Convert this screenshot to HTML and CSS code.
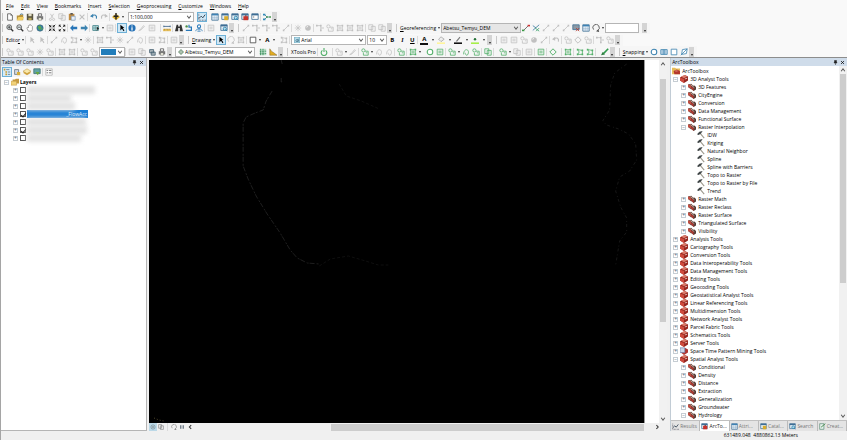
FILE: index.html
```html
<!DOCTYPE html>
<html lang="en">
<head>
<meta charset="utf-8">
<title>Map workspace</title>
<link rel="stylesheet" href="styles.css">
</head>
<body>
<svg class="defs" aria-hidden="true">
  <symbol id="new" viewBox="0 0 10 10"><path d="M2 1h4l2 2v6H2z" fill="#fff" stroke="#555"/><path d="M6 1v2h2" fill="none" stroke="#777"/></symbol>
  <symbol id="open" viewBox="0 0 10 10"><path d="M1 3h3l1-1h4v7H1z" fill="#b8923c"/><path d="M1 9l2-4h7L8 9z" fill="#f2cf62"/><path d="M5 2l2-1 2 1" fill="none" stroke="#3c78a8"/></symbol>
  <symbol id="save" viewBox="0 0 10 10"><path d="M1 1h8v8H1z" fill="#5a5540"/><path d="M3 1h4v3H3z" fill="#e5e0c8"/><path d="M3 6h4v3H3z" fill="#b9a95c"/></symbol>
  <symbol id="print" viewBox="0 0 10 10"><path d="M3 1h4v3H3z" fill="#fff" stroke="#555"/><path d="M1 4h8v4H1z" fill="#777"/><path d="M3 6h4v3H3z" fill="#f8f8e8" stroke="#555" stroke-width=".6"/></symbol>
  <symbol id="cut" viewBox="0 0 10 10"><path d="M3 1l3 5M7 1L4 6" fill="none" stroke="currentColor"/><circle cx="3" cy="8" r="1.3" fill="none" stroke="currentColor"/><circle cx="7" cy="8" r="1.3" fill="none" stroke="currentColor"/></symbol>
  <symbol id="copy" viewBox="0 0 10 10"><path d="M1 1h5v6H1zM4 3h5v6H4z" fill="#f6f6f6" stroke="currentColor"/></symbol>
  <symbol id="paste" viewBox="0 0 10 10"><path d="M1 1h7v8H1z" fill="#c08c42"/><path d="M3 0h3v2H3z" fill="#555"/><path d="M4 4h5v5H4z" fill="#e6effa" stroke="#6484ad" stroke-width=".7"/></symbol>
  <symbol id="del" viewBox="0 0 10 10"><path d="M2 2l6 6M8 2L2 8" stroke="currentColor" stroke-width="1.4"/></symbol>
  <symbol id="undo" viewBox="0 0 10 10"><path d="M2 4c4-3 7-1 6 3" fill="none" stroke="currentColor" stroke-width="1.5"/><path d="M0 4l4-3v5z" fill="currentColor"/></symbol>
  <symbol id="redo" viewBox="0 0 10 10"><path d="M8 4C4 1 1 3 2 7" fill="none" stroke="currentColor" stroke-width="1.5"/><path d="M10 4L6 1v5z" fill="currentColor"/></symbol>
  <symbol id="add" viewBox="0 0 10 10"><path d="M5 1l5 4-5 4-5-4z" fill="#e3b52f"/><path d="M5 0v8M2 4h6" stroke="#222" stroke-width="1.8"/></symbol>
  <symbol id="editbar" viewBox="0 0 10 10"><path d="M1 7l3-3 2 2 3-4" fill="none" stroke="#345" stroke-width="1.2"/><path d="M1 9h9M1 1v7" stroke="#445" stroke-dasharray="1 1"/></symbol>
  <symbol id="table" viewBox="0 0 10 10"><path d="M1 1h8v8H1z" fill="#eef5fb" stroke="#3e6d94"/><path d="M1 1h8v2H1z" fill="#3e82b4"/><path d="M1 6h8M4 3v6M6.500 3v6" stroke="#7ba0bd" stroke-width=".6"/></symbol>
  <symbol id="catalog" viewBox="0 0 10 10"><path d="M1 1h8v7H1z" fill="#e8f0f6" stroke="#3e6d94"/><path d="M1 1h8v2H1z" fill="#3e6d94"/><path d="M4 4h5v5H4z" fill="#d8ac2d"/></symbol>
  <symbol id="search" viewBox="0 0 10 10"><path d="M1 1h8v7H1z" fill="#e8f0f6" stroke="#3e6d94"/><path d="M1 1h8v2H1z" fill="#3e6d94"/><circle cx="6" cy="6" r="2" fill="#b6e0ee" stroke="#247caa"/><path d="M7 7l2 2" stroke="#247caa"/></symbol>
  <symbol id="toolwin" viewBox="0 0 10 10"><path d="M1 1h8v7H1z" fill="#e8f0f6" stroke="#3e6d94"/><path d="M1 1h8v2H1z" fill="#3e6d94"/><path d="M3 4h6v5H3z" fill="#c7322b"/><path d="M5 3h2v1H5z" fill="#611"/></symbol>
  <symbol id="python" viewBox="0 0 10 10"><path d="M1 1h8v7H1z" fill="#fff" stroke="#3e6d94"/><path d="M1 1h8v2H1z" fill="#3e6d94"/><path d="M3 4l1 1-1 1" fill="none" stroke="#444" stroke-width=".7"/></symbol>
  <symbol id="model" viewBox="0 0 10 10"><path d="M2 2l3 3-3 3M5 5h4" fill="none" stroke="#31758e"/><path d="M0 1h3v2H0zM0 7h3v2H0z" fill="#338ab8"/><path d="M4 4h2v2H4zM8 4h2v2H8z" fill="#4b9b4b"/></symbol>
  <symbol id="zoomin" viewBox="0 0 10 10"><path d="M6 6l3 3" stroke="#333" stroke-width="1.700"/><circle cx="4" cy="4" r="3" fill="#edf6f8" stroke="#444"/><path d="M2 4h4M4 2v4" stroke="#333"/></symbol>
  <symbol id="zoomout" viewBox="0 0 10 10"><path d="M6 6l3 3" stroke="#333" stroke-width="1.700"/><circle cx="4" cy="4" r="3" fill="#edf6f8" stroke="#444"/><path d="M2 4h4" stroke="#333"/></symbol>
  <symbol id="pan" viewBox="0 0 10 10"><path d="M3 9L1 5l1-1 1 1V2l1-1 1 1V1h1l1 1 1 1v4L7 9z" fill="#fff" stroke="#777" stroke-width=".8"/></symbol>
  <symbol id="globe" viewBox="0 0 10 10"><circle cx="5" cy="5" r="4" fill="#3581ae" stroke="#3a5c64" stroke-width=".7"/><path d="M2 3l3-1 2 2-2 4-2-2zM7 5l2 1-2 2z" fill="#59a552"/></symbol>
  <symbol id="page" viewBox="0 0 10 10"><circle cx="5" cy="5" r="3.500" fill="#d5e3e9" stroke="#5f7c8a"/><path d="M3 4h4M3 6h4" stroke="#5f7c8a"/></symbol>
  <symbol id="fixin" viewBox="0 0 10 10"><path d="M1 1l3 3M9 1L6 4M1 9l3-3M9 9L6 6" stroke="#222" stroke-width="1.2"/><path d="M4 1v3H1zM6 1v3h3zM1 6h3v3zM9 6H6v3z" fill="#222"/></symbol>
  <symbol id="fixout" viewBox="0 0 10 10"><path d="M1 4V1h3zM9 4V1H6zM1 6v3h3zM9 6v3H6z" fill="#222"/><path d="M2 2l2 2M8 2L6 4M2 8l2-2M8 8L6 6" stroke="#222"/></symbol>
  <symbol id="back" viewBox="0 0 10 10"><path d="M0 5l4-4v2.500h5v3H4V9z" fill="#2876b8"/></symbol>
  <symbol id="fwd" viewBox="0 0 10 10"><path d="M10 5L6 1v2.500H1v3h5V9z" fill="currentColor"/></symbol>
  <symbol id="select" viewBox="0 0 10 10"><path d="M1 2h7v6H1z" fill="#c7e7e4" stroke="#397c85"/><path d="M4 2v6M1 5h7" stroke="#397c85" stroke-width=".7"/><path d="M6 3l3 3-2 1-1 2z" fill="#222"/></symbol>
  <symbol id="pointer" viewBox="0 0 10 10"><path d="M3 1v7l2-2 2 3 1-1-2-3h2z" fill="currentColor"/></symbol>
  <symbol id="info" viewBox="0 0 10 10"><circle cx="5" cy="5" r="4.500" fill="#2470b5"/><path d="M5 4v4M5 2v1" stroke="#fff" stroke-width="1.500"/></symbol>
  <symbol id="pen" viewBox="0 0 10 10"><path d="M2 8l5-6 1 1-5 5zM1 9l1-2" fill="none" stroke="currentColor"/></symbol>
  <symbol id="brush" viewBox="0 0 10 10"><path d="M3 7l6-6" stroke="#2f9a4c" stroke-width="2"/><path d="M0 9l2-4 3 3z" fill="#2f7d42"/></symbol>
  <symbol id="box" viewBox="0 0 10 10"><path d="M1.500 1.500h7v7h-7zM3 4h4M3 6h4" fill="none" stroke="currentColor"/></symbol>
  <symbol id="measure" viewBox="0 0 10 10"><path d="M1 3h8M1 2v2M9 2v2" stroke="#345b80"/><path d="M0 6h10v3H0z" fill="#e9c15d"/><path d="M2 6v2M4 6v1M6 6v2M8 6v1" stroke="#745d2f" stroke-width=".6"/></symbol>
  <symbol id="find" viewBox="0 0 10 10"><path d="M2 1h2v2h2V1h2l2 8H6V5H4v4H0z" fill="#333"/></symbol>
  <symbol id="route" viewBox="0 0 10 10"><path d="M1 8h7V4H5V1" fill="none" stroke="#2878b8" stroke-width="1.500"/><circle cx="2" cy="3" r="1.500" fill="#489044"/></symbol>
  <symbol id="xy" viewBox="0 0 10 10"><circle cx="5" cy="3" r="2" fill="none" stroke="#2878b8" stroke-width="1.300"/><path d="M5 5v3M1 9c0-4 8-4 8 0M3 9h4" fill="none" stroke="#2878b8"/></symbol>
  <symbol id="line" viewBox="0 0 10 10"><path d="M2 8l6-6" stroke="currentColor"/><path d="M1 7h2v2H1zM7 1h2v2H7z" fill="currentColor"/></symbol>
  <symbol id="angle" viewBox="0 0 10 10"><path d="M1 2h5v7M6 5h4" fill="none" stroke="currentColor"/><path d="M0 1h2v2H0zM5 1h2v2H5zM5 7h2v2H5z" fill="currentColor"/></symbol>
  <symbol id="poly" viewBox="0 0 10 10"><path d="M2 2l6 1v5H2L4 5z" fill="none" stroke="currentColor"/><path d="M1 1h2v2H1zM7 2h2v2H7zM7 7h2v2H7zM1 7h2v2H1z" fill="currentColor"/></symbol>
  <symbol id="arc" viewBox="0 0 10 10"><path d="M2 8c0-8 7-7 6-2S4 9 4 6" fill="none" stroke="currentColor"/></symbol>
  <symbol id="nodes" viewBox="0 0 10 10"><path d="M2 2v6h6V2zM2 5h6M5 2v6" fill="none" stroke="currentColor" stroke-width=".8"/><path d="M1 1h2v2H1zM7 1h2v2H7zM1 7h2v2H1zM7 7h2v2H7z" fill="currentColor"/></symbol>
  <symbol id="cluster" viewBox="0 0 10 10"><circle cx="3" cy="3" r="2" fill="none" stroke="currentColor"/><path d="M5 4h4v5H3V6M6 6h2" fill="none" stroke="currentColor"/></symbol>
  <symbol id="ball" viewBox="0 0 10 10"><circle cx="5" cy="5" r="3.500" fill="currentColor"/><path d="M3 4l2-1" stroke="#fff"/></symbol>
  <symbol id="star" viewBox="0 0 10 10"><path d="M5 1v8M1 5h8M2 2l6 6M8 2L2 8" stroke="currentColor" stroke-width=".8"/></symbol>
  <symbol id="diamond" viewBox="0 0 10 10"><path d="M5 1l4 4-4 4-4-4z" fill="none" stroke="currentColor" stroke-width="1.200"/></symbol>
  <symbol id="power" viewBox="0 0 10 10"><path d="M3 3a3.500 3.500 0 1 0 4 0M5 0v5" fill="none" stroke="currentColor" stroke-width="1.400"/></symbol>
  <symbol id="rot" viewBox="0 0 10 10"><path d="M2 7a4 4 0 1 1 5 1" fill="none" stroke="currentColor"/><path d="M5 9l3-2 1 3z" fill="currentColor"/></symbol>
  <symbol id="ctrl" viewBox="0 0 10 10"><path d="M2 8l6-6" stroke="#555"/><path d="M0 7h3v2H0z" fill="#3a9a45"/><path d="M7 1h3v2H7z" fill="#c33"/></symbol>
  <symbol id="ctrlx" viewBox="0 0 10 10"><path d="M1 2l4 3M1 8l8-7" stroke="#3978a0"/><path d="M4 5l5 4M9 5L5 9" stroke="#38a068"/></symbol>
  <symbol id="link" viewBox="0 0 10 10"><path d="M1 1h8v6H1z" fill="#8c99a5" stroke="#3e6d94"/><path d="M5 5l4 4M9 5L5 9" stroke="#bd392d"/></symbol>
  <symbol id="rect" viewBox="0 0 10 10"><path d="M1.500 1.500h7v7h-7z" fill="#fff" stroke="currentColor"/></symbol>
  <symbol id="circle" viewBox="0 0 10 10"><circle cx="5" cy="5" r="3.500" fill="#fff" stroke="currentColor" stroke-width="1.300"/></symbol>
  <symbol id="ends" viewBox="0 0 10 10"><path d="M1 2h8v6H1z" fill="#c9dcea" stroke="currentColor"/><path d="M4 2v6M6 2v6" stroke="currentColor"/></symbol>
  <symbol id="edge" viewBox="0 0 10 10"><path d="M2 8l1-6 6-1-1 6z" fill="#fff" stroke="currentColor"/><path d="M1 9l8-8" stroke="currentColor"/></symbol>
  <symbol id="fill" viewBox="0 0 10 10"><path d="M2 4l3-3 4 3-4 3z" fill="#eee" stroke="#888" stroke-width=".7"/><path d="M0 8h10v2H0z" fill="#fff59b"/></symbol>
  <symbol id="linecol" viewBox="0 0 10 10"><path d="M2 7l5-6 1 1-4 5z" fill="#777"/><path d="M0 8h10v2H0z" fill="#111"/></symbol>
  <symbol id="mark" viewBox="0 0 10 10"><circle cx="5" cy="4" r="1.500" fill="#247036"/><path d="M0 8h10v2H0z" fill="#a7ef48"/></symbol>
  <symbol id="layer" viewBox="0 0 10 10"><path d="M5 0l5 5-5 5-5-5z" fill="#75957c"/><path d="M5 2v6M2 5h6" stroke="#e5efe3"/></symbol>
  <symbol id="hist" viewBox="0 0 10 10"><path d="M1 1l2 3 3 2 4 3H1z" fill="#e4ad20" stroke="#795f25" stroke-width=".6"/></symbol>
  <symbol id="raster" viewBox="0 0 10 10"><path d="M1 1h8v8H1z" fill="#b8dec6"/><path d="M2 1v8M5 1v8M1 4h8M1 7h8" stroke="#348956" stroke-dasharray="2 1"/></symbol>
  <symbol id="cubes" viewBox="0 0 10 10"><path d="M2 2h5v4H2zM4 5h5v4H4z" fill="#aeb8bd" stroke="#446070"/></symbol>
  <symbol id="fonticon" viewBox="0 0 10 10"><path d="M1 0h8v10H1z" fill="#bfe0ec" stroke="#4291ad"/><circle cx="5" cy="6" r="1.800" fill="none" stroke="#235a75"/><path d="M7 3v5" stroke="#235a75"/></symbol>
  <symbol id="list" viewBox="0 0 10 10"><path d="M1 2h2M3 5h2M3 8h2" stroke="#c99d35" stroke-width="2"/><path d="M4 2h4M6 5h3M6 8h3" stroke="#5a7890"/></symbol>
  <symbol id="cyl" viewBox="0 0 10 10"><path d="M2 2h5v6H2z" fill="#d4dae0" stroke="#66747e"/><path d="M5 5h4v4H5z" fill="#d7ae38"/></symbol>
  <symbol id="layers" viewBox="0 0 10 10"><path d="M5 3l5 3-5 3-5-3z" fill="#d7a63c"/><path d="M5 1l5 3-5 3-5-3z" fill="#fae8a9" stroke="#b18832" stroke-width=".6"/></symbol>
  <symbol id="selist" viewBox="0 0 10 10"><path d="M1 1h8v6H1z" fill="#61a5a5" stroke="#3d6d75"/><path d="M3 5h5L6 9z" fill="#69a741"/></symbol>
  <symbol id="opts" viewBox="0 0 10 10"><path d="M1 1h8v8H1z" fill="#fff" stroke="#999" stroke-width=".7"/><path d="M2 3h2M5 3h3M2 6h2M5 6h3" stroke="#555"/></symbol>
  <symbol id="folder" viewBox="0 0 10 10"><path d="M2 2h3l1-1h4v6H2z" fill="#c79b42"/><path d="M0 4h7v5H0z" fill="#f1d279" stroke="#b78f3e" stroke-width=".6"/></symbol>
  <symbol id="toolbox" viewBox="0 0 10 10"><path d="M0 3l6-3 4 2v5L5 10 0 7z" fill="#96261f"/><path d="M0 3l5 2v5L0 7z" fill="#cf4b3e"/><path d="M1 2l5-2 3 2-4 2z" fill="#db7c6c"/><path d="M6 5l3-1" stroke="#f2d7d0"/></symbol>
  <symbol id="pybox" viewBox="0 0 10 10"><path d="M1 3l5-2 4 2v4L5 10 1 7z" fill="#b23531"/><path d="M0 1h6v6H0z" fill="#cad6e8" stroke="#5270a0" stroke-width=".7"/></symbol>
  <symbol id="toolset" viewBox="0 0 10 10"><path d="M0 2l4-1 3 3v3L4 8 0 5z" fill="#6b493e"/><path d="M0 2l4 1v4L0 5z" fill="#c24c40"/><path d="M4 4l4-1 2 2v3L7 10 4 7z" fill="#543a34"/><path d="M4 4l3 2v4L4 7z" fill="#b13a32"/><path d="M3 2l5 4" stroke="#e3d9cc" stroke-width=".8"/></symbol>
  <symbol id="hammer" viewBox="0 0 10 10"><path d="M4 3l5 6" stroke="#9a978b" stroke-width="1.300"/><path d="M0 4l3-3 4-1-2 3-3 2z" fill="#3f4546"/></symbol>
  <symbol id="root" viewBox="0 0 10 10"><path d="M0 1h4l1 1h5v7H0z" fill="#e7bd59"/><path d="M2 5l4-2 4 2v4H3z" fill="#b3382c"/><path d="M4 5h3" stroke="#f0a18d"/></symbol>
  <symbol id="create" viewBox="0 0 10 10"><path d="M1 1h6v8H1z" fill="#e7f3ee" stroke="#5a8d76"/><path d="M3 6l6-5" stroke="#4d8c51" stroke-width="1.400"/></symbol>
  <symbol id="pin" viewBox="0 0 10 10"><path d="M3 1h4v4h1v1H2V5h1zM5 6v4" fill="#222" stroke="#222"/></symbol>
  <symbol id="up" viewBox="0 0 10 10"><path d="M2 7l3-4 3 4" fill="none" stroke="#555" stroke-width="1.700"/></symbol>
  <symbol id="down" viewBox="0 0 10 10"><path d="M2 3l3 4 3-4" fill="none" stroke="#555" stroke-width="1.700"/></symbol>
  <symbol id="left" viewBox="0 0 10 10"><path d="M7 2L4 5l3 3" fill="none" stroke="#333" stroke-width="1.700"/></symbol>
  <symbol id="right" viewBox="0 0 10 10"><path d="M4 2l3 3-3 3" fill="none" stroke="#333" stroke-width="1.700"/></symbol>
  <symbol id="pause" viewBox="0 0 10 10"><path d="M3 2v6M7 2v6" stroke="#456" stroke-width="1.700"/></symbol>
</svg>

<div class="app">
  <nav class="menu" aria-label="Main menu">
    <button><u>F</u>ile</button><button><u>E</u>dit</button><button><u>V</u>iew</button><button><u>B</u>ookmarks</button><button><u>I</u>nsert</button><button><u>S</u>election</button><button><u>G</u>eoprocessing</button><button><u>C</u>ustomize</button><button><u>W</u>indows</button><button><u>H</u>elp</button>
  </nav>
  <div class="bars" id="bars"></div>

  <div class="work">
    <section class="panel toc">
      <header><h2>Table Of Contents</h2><button aria-label="Pin contents"><svg><use href="#pin"/></svg></button><button aria-label="Close contents"><svg><use href="#del"/></svg></button></header>
      <div class="tocbar" id="tocbar"></div>
      <div class="toctree">
        <div class="trow top"><button class="exp" aria-label="Toggle layers">−</button><svg><use href="#folder"/></svg><b>Layers</b></div>
        <div class="tocbody">
          <div id="checks"></div>
          <div class="names"><i class="n1"></i><i class="n2"></i><i class="n3"></i><span class="sel">_FlowAcc</span><i class="n4"></i><i class="n5"></i><i class="n6"></i></div>
        </div>
      </div>
    </section>

    <main class="view">
      <div class="canvasrow">
        <svg class="map" viewBox="0 0 495 363" preserveAspectRatio="none" role="img" aria-label="Flow accumulation raster">
          <g fill="none" stroke="#262626" stroke-width=".8">
            <path d="M132 0l1 4M132 18v4l3-1M123 31l-6 10-3 9-8 3-9 4-3 6v43l5 13 8 17 11 18 13 19 10 17 7 8 10 5 12 1" stroke-dasharray="5 2 2 1"/>
            <path d="M170 206l11-7 18-3 14 4 16 5h10M190 24l7 12 15 5 18 8" stroke="#131313" stroke-dasharray="3 2"/>
            <path d="M477 4l-12 9-4 12-1 25-7 11 4 4 12 4 10 5 7 10 1 16-7 11-10 6-4 14 5 16 6 11v14l-7 9-4 24" stroke="#1d1d1d" stroke-dasharray="3 3 1 2"/>
            <path d="M5 358l5 2 5 1" stroke="#665a3a" stroke-dasharray="1 2"/>
          </g>
        </svg>
        <div class="gutter"></div>
        <div class="vscroll"><svg><use href="#up"/></svg><span class="thumb mapthumb"></span><svg><use href="#down"/></svg></div>
      </div>
      <div class="viewbar">
        <button class="on" aria-label="Data view"><svg><use href="#page"/></svg></button><button aria-label="Layout view"><svg><use href="#copy"/></svg></button><span class="sep"></span><button aria-label="Refresh"><svg><use href="#rot"/></svg></button><button aria-label="Pause drawing"><svg><use href="#pause"/></svg></button><button aria-label="Scroll left"><svg><use href="#left"/></svg></button>
        <span class="track"><span></span></span>
        <button aria-label="Scroll right"><svg><use href="#right"/></svg></button>
      </div>
    </main>

    <section class="panel box">
      <header><h2>ArcToolbox</h2><button aria-label="Pin toolbox"><svg><use href="#pin"/></svg></button><button aria-label="Close toolbox"><svg><use href="#del"/></svg></button></header>
      <div class="boxbody">
        <div class="tree" id="tree"></div>
        <div class="vscroll"><svg><use href="#up"/></svg><span class="thumb boxthumb"></span><svg><use href="#down"/></svg></div>
      </div>
      <div class="tabs">
        <button><svg><use href="#editbar"/></svg>Results</button><button class="on"><svg><use href="#toolwin"/></svg>ArcTo...</button><button><svg><use href="#table"/></svg>Attri...</button><button><svg><use href="#catalog"/></svg>Catal...</button><button><svg><use href="#search"/></svg>Search</button><button><svg><use href="#create"/></svg>Creat...</button>
      </div>
    </section>
  </div>
  <footer class="status">631489.048&nbsp; 4880862.13 Meters</footer>
</div>
<script src="app.js"></script>
</body>
</html>
```
FILE: styles.css
```css
* { box-sizing: border-box; }
html, body { height: 100%; margin: 0; }
body { font: 5px/8px "Open Sans", "Noto Sans", sans-serif; color: #000; background: #f0f0f0; overflow: hidden; }
button, input, select { font: inherit; color: inherit; margin: 0; padding: 0; border: 0; background: none; border-radius: 0; }
svg { display: block; width: 8px; height: 8px; flex: none; }
.defs { position: absolute; width: 0; height: 0; }
.app { height: 100%; display: flex; flex-direction: column; border-left: 1px solid #a5a5a5; }

.menu { display: flex; gap: 7px; height: 11px; padding-left: 5px; background: #f9f9f9; align-items: center; }
.bars { background: #f9f9f9; border-bottom: 1px solid #8d8d8d; }
.row { display: flex; height: 12px; align-items: center; }
.row:first-child, .row:last-child { height: 11px; }
.bar { display: flex; align-items: center; height: 11px; background: #f6f6f6; }
.grip { width: 4px; height: 8px; flex: none; background: linear-gradient(90deg, transparent 1px, #c8c8c8 1px, #c8c8c8 2px, transparent 2px); }
.tb { width: 10px; height: 10px; display: flex; align-items: center; justify-content: center; flex: none; }
.bar .tb.sel { border: 1px solid #6db0d6; background: #cfe7f5; }
.tb.dim { color: #c0c0c0; }
.tb.green { color: #53b06a; }
.tb.blue { color: #3c83b0; }
.tb.dark { color: #444; }
.fmt { font-size: 6px; font-weight: 700; }
.fmt.ital { font-style: italic; font-family: "Liberation Serif", serif; }
.fmt.under { text-decoration: underline; }
.fmt.col { border-bottom: 2px solid #111; height: 9px; width: 8px; margin: 0 1px; line-height: 7px; }
.sep { width: 1px; height: 8px; background: #dadada; margin-right: 1px; flex: none; }
.sp { width: 3px; flex: none; }
.caret { width: 7px; height: 8px; display: flex; align-items: center; justify-content: center; flex: none; }
.caret::before { content: ""; border: 1px solid transparent; border-top: 2px solid #333; border-bottom: 0; }
.caret.s { width: 4px; }
.ovf { width: 5px; height: 10px; background: #d4d4d4; display: flex; align-items: flex-end; justify-content: center; padding-bottom: 1px; flex: none; margin-right: 3px; }
.ovf::before { content: ""; border: 1px solid transparent; border-top: 2px solid #222; border-bottom: 0; }
.label { white-space: nowrap; padding: 0 1px; }
.combo { display: flex; align-items: center; height: 10px; border: 1px solid #b5b5b5; background: #fff; padding-left: 1px; flex: none; }
.combo select, .combo input { flex: 1; min-width: 0; height: 8px; line-height: 8px; appearance: none; outline: 0; }
.combo svg { width: 6px; height: 6px; margin: 0 1px; }
.combo.grey { background: #e6e6e6; }
.combo .swatch { flex: 1; height: 6px; background: #217dbb; }
.w-scale { width: 66px; }
.w-geo { width: 80px; }
.w-box { width: 34px; }
.w-font { width: 75px; }
.w-size { width: 20px; margin-left: 1px; }
.w-layer { width: 80px; }
.w-color { width: 26px; }

.work { flex: 1; min-height: 0; display: flex; }
.panel { display: flex; flex-direction: column; background: #fff; }
.panel header { display: flex; align-items: center; height: 8px; background: #cfdcea; padding: 0 2px 0 1px; gap: 2px; flex: none; }
.panel h2 { flex: 1; margin: 0; font-size: 5px; line-height: 8px; font-weight: 400; }
.panel header svg { width: 5px; height: 5px; }
.toc { width: 17.2%; border-right: 1px solid #b5b5b5; border-bottom: 1px solid #b5b5b5; }
.tocbar { display: flex; height: 11px; align-items: center; background: #f5f5f5; padding-left: 1px; flex: none; }
.tocbar .sel { border: 1px solid #6db0d6; background: #d7ebf7; }
.toctree { padding: 1px 0 0 3px; }
.trow { display: flex; align-items: center; height: 8px; white-space: nowrap; }
.exp { width: 5px; height: 5px; border: 1px solid #c6cdd3; font-size: 5px; line-height: 3px; color: #567; flex: none; display: flex; align-items: center; justify-content: center; }
.top .exp { margin-right: 2px; }
.top b { margin-left: 1px; }
.tocbody { display: flex; padding-left: 9px; }
.crow { display: flex; align-items: center; height: 8px; gap: 2px; }
.crow input { appearance: none; width: 6px; height: 6px; margin: 0; border: 1px solid #555; background: #fff; display: flex; align-items: center; justify-content: center; }
.crow input:checked::before { content: ""; width: 2px; height: 4px; border: solid #222; border-width: 0 1px 1px 0; transform: rotate(40deg); }
.names { display: flex; flex-direction: column; margin-left: 1px; }
.names i { height: 8px; background: #e4e4e4; filter: blur(2px); }
.n1 { width: 68px; }
.n2 { width: 44px; }
.n3 { width: 48px; }
.n4 { width: 59px; }
.n5 { width: 60px; }
.n6 { width: 54px; }
.names .sel { width: 61px; height: 8px; background: #1d7fd6; color: #e6f2fc; text-align: right; padding-right: 1px; }

.view { flex: 1; min-width: 0; display: flex; flex-direction: column; padding: 2px 3px 0 2px; background: #f0f0f0; }
.canvasrow { flex: 1; min-height: 0; display: flex; }
.map { flex: 1; min-width: 0; width: auto; height: 100%; background: #000; }
.gutter { width: 15px; background: #fff; border-left: 1px solid #999; }
.vscroll { width: 8px; background: #f1f1f1; display: flex; flex-direction: column; align-items: center; flex: none; }
.vscroll svg { width: 6px; height: 6px; margin: 1px 0; }
.thumb { width: 6px; background: #cdcdcd; }
.mapthumb { height: 67%; margin: 11px 0 auto; }
.boxthumb { height: 59%; margin: 0 0 auto; }
.viewbar { display: flex; align-items: center; height: 8px; padding-right: 6px; flex: none; }
.viewbar button { width: 8px; height: 8px; display: flex; align-items: center; justify-content: center; color: #777; }
.viewbar svg { width: 6px; height: 6px; }
.viewbar .on { background: #bcd9e8; }
.viewbar .sep { margin: 0 2px; }
.track { flex: 1; height: 7px; display: flex; }
.track span { width: 68%; margin-left: 30%; background: #cdcdcd; }

.box { width: 20.9%; border-left: 1px solid #c2ccd5; }
.boxbody { flex: 1; min-height: 0; display: flex; }
.tree { flex: 1; min-width: 0; overflow: hidden; padding-top: 1px; }
.tree .trow { gap: 2px; }
.l0 { padding-left: 1px; }
.l1 { padding-left: 2px; }
.l2 { padding-left: 10px; }
.l3 { padding-left: 26px; }
.tabs { display: flex; height: 11px; background: #e4e4e4; border-top: 1px solid #c0c0c0; flex: none; }
.tabs button { flex: 1; display: flex; align-items: center; gap: 1px; padding-left: 1px; color: #777; white-space: nowrap; border-right: 1px solid #bbb; overflow: hidden; }
.tabs .on { background: #fff; color: #222; }
.tabs svg { width: 7px; height: 7px; }
.status { height: 9px; line-height: 9px; text-align: right; padding-right: 49px; background: #f0f0f0; flex: none; }
```
FILE: app.js
```js
// Toolbar items: "icon[:tone]", "|" separator, "v"/"w" narrow/wide menu arrow,
// "_" spacer, "=" grip, "#" overflow, "'Text" label, "@name" combo box, "!X" text format.
const rows = [
  "= new open save print | cut:dim copy:dim paste del:dim | undo:blue redo:dim | add v _ @scale _ editbar:sel _ table catalog search toolwin python | model #",
  "= zoomin zoomout pan globe | fixin fixout | back fwd:blue | select v box:dim | pointer:sel info pen:dim box:dim _ | measure | find route xy | box:dim _ search # = line:dim angle:dim angle:dim angle:dim line:dim | star:dim ball:dim | angle:dim cluster:dim nodes:dim nodes:dim nodes:dim | copy:dim copy:dim # = 'G|eoreferencing v @geo ctrl ctrlx line:dim line:dim line:dim link table rot:dark v @box _ #",
  "= 'Edito|r v | pointer:dim pointer:dim | line:dim arc:dim poly:dim v star:dim | nodes:dim angle:dim star:dim line:dim arc:dim | box:dim poly:dim | box:dim # = 'D|rawing v pointer:sel rot:dim nodes:dim | rect:dark v !A v _ poly:dim | @font @size !B !I !U | !C w fill w linecol w mark w # = box:dim box:dim cluster:dim ball:dim line:dim | undo:dim | cluster:dim diamond:dim cluster:dim | angle:dim cluster:dim #",
  "= cluster:dim cluster:dim cluster:dim star:dim cluster:dim | nodes:dim nodes:dim | cluster:dim cluster:dim @color | box:dim copy:dim cubes print # @layer _ raster hist # = '|XTools_Pro | power:green _ | cluster:dim v pen:dim | cluster:green v arc:dim arc:dim | cluster:green | nodes:green v _ circle:green box:green | cluster:green v arc:green cluster:green | copy:green | _ cluster:green v copy:dim | box:dim | box:green | diamond:green _ | nodes:green | poly:green poly:green | _ brush # = 'S|napping v circle:blue ends:blue rect:blue edge:blue #"
];
const combos = {
  scale: ["", "<input aria-label='Map scale' value='1:100,000'>"],
  geo: ["grey", "<select aria-label='Georeferenced layer'><option>Abetsu_Temyu_DEM</option></select>"],
  box: ["plain", "<input aria-label='Rotation'>"],
  font: ["", "<svg><use href='#fonticon'/></svg><select aria-label='Font'><option>Arial</option></select>"],
  size: ["", "<select aria-label='Font size'><option>10</option></select>"],
  layer: ["", "<svg><use href='#layer'/></svg><select aria-label='Active layer'><option>Aibetsu_Temyu_DEM</option></select>"],
  color: ["", "<span class='swatch'></span>"]
};
const svg = id => `<svg><use href="#${id}"/></svg>`;
const tool = (id, tone = "") => `<button class="tb ${tone}" aria-label="${id}">${svg(id)}</button>`;
const letters = { A: ["A", ""], B: ["B", ""], I: ["I", "ital"], U: ["U", "under"], C: ["A", "col"] };

function item(t) {
  if (t === "=") return '<span class="grip"></span>';
  if (t === "_") return '<span class="sp"></span>';
  if (t === "|") return '<span class="sep"></span>';
  if (t === "v") return '<span class="caret s"></span>';
  if (t === "w") return '<span class="caret"></span>';
  if (t === "#") return '<button class="ovf" aria-label="Toolbar options"></button>';
  if (t[0] === "!") { const [c, k] = letters[t[1]]; return `<button class="tb fmt ${k}">${c}</button>`; }
  if (t === "'Edito|r") return '<button class="label">Edito<u>r</u></button>';
  if (t[0] === "'") { const [a, b] = t.slice(1).replace("_", " ").split("|"); return `<button class="label">${a ? `<u>${a}</u>` : ""}${b}</button>`; }
  if (t[0] === "@") {
    const n = t.slice(1), c = combos[n];
    return `<span class="combo w-${n} ${c[0]}">${c[1]}${c[0] === "plain" ? "" : svg("down")}</span>`;
  }
  return tool(...t.split(":"));
}
document.getElementById("bars").innerHTML = rows
  .map(r => `<div class="row"><div class="bar">${r.split(" ").map(item).join("")}</div></div>`).join("");
document.getElementById("tocbar").innerHTML =
  ["list:sel", "cyl", "layers", "selist", "|", "opts"].map(item).join("");
document.getElementById("checks").innerHTML = [0, 0, 0, 1, 0, 1, 0].map((c, i) =>
  `<div class="crow"><button class="exp" aria-label="Expand layer ${i + 1}">+</button><input type="checkbox" aria-label="Layer ${i + 1}" ${c ? "checked" : ""}></div>`).join("");

const tree = `0 root ArcToolbox
1 toolbox -3D Analyst Tools
2 toolset +3D Features
2 toolset +CityEngine
2 toolset +Conversion
2 toolset +Data Management
2 toolset +Functional Surface
2 toolset -Raster Interpolation
3 hammer IDW
3 hammer Kriging
3 hammer Natural Neighbor
3 hammer Spline
3 hammer Spline with Barriers
3 hammer Topo to Raster
3 hammer Topo to Raster by File
3 hammer Trend
2 toolset +Raster Math
2 toolset +Raster Reclass
2 toolset +Raster Surface
2 toolset +Triangulated Surface
2 toolset +Visibility
1 toolbox +Analysis Tools
1 toolbox +Cartography Tools
1 toolbox +Conversion Tools
1 toolbox +Data Interoperability Tools
1 toolbox +Data Management Tools
1 toolbox +Editing Tools
1 toolbox +Geocoding Tools
1 toolbox +Geostatistical Analyst Tools
1 toolbox +Linear Referencing Tools
1 toolbox +Multidimension Tools
1 toolbox +Network Analyst Tools
1 toolbox +Parcel Fabric Tools
1 toolbox +Schematics Tools
1 toolbox +Server Tools
1 pybox +Space Time Pattern Mining Tools
1 toolbox -Spatial Analyst Tools
2 toolset +Conditional
2 toolset +Density
2 toolset +Distance
2 toolset +Extraction
2 toolset +Generalization
2 toolset +Groundwater
2 toolset -Hydrology`;
document.getElementById("tree").innerHTML = tree.split("\n").map(l => {
  const [, lv, ic, sign, name] = l.match(/^(\d) (\w+) ([+-]?)(.*)$/);
  const e = sign ? `<button class="exp" aria-label="Toggle ${name}">${sign === "-" ? "−" : "+"}</button>` : "";
  return `<div class="trow l${lv}">${e}${svg(ic)}<span>${name}</span></div>`;
}).join("");
```
